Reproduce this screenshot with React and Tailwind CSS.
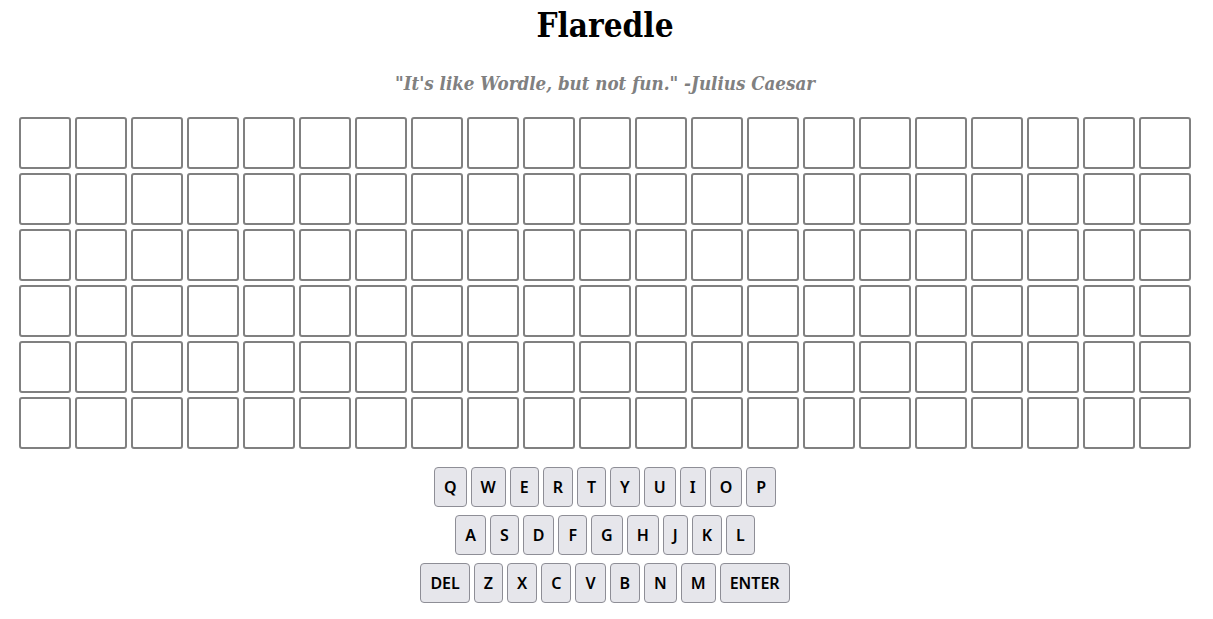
const ROWS = 6;
const COLS = 21;

const keyRows = [
  ['Q', 'W', 'E', 'R', 'T', 'Y', 'U', 'I', 'O', 'P'],
  ['A', 'S', 'D', 'F', 'G', 'H', 'J', 'K', 'L'],
  ['DEL', 'Z', 'X', 'C', 'V', 'B', 'N', 'M', 'ENTER'],
];

const Board = () => (
  <div className="flex flex-col gap-1 items-center">
    {Array.from({ length: ROWS }).map((_, r) => (
      <div key={r} className="flex gap-1">
        {Array.from({ length: COLS }).map((_, c) => (
          <div
            key={c}
            className="w-[52px] h-[52px] border-2 border-[#808080] rounded-[3px] bg-white"
          ></div>
        ))}
      </div>
    ))}
  </div>
);

const Keyboard = () => (
  <div className="flex flex-col gap-2 items-center mt-[18px]">
    {keyRows.map((row, i) => (
      <div key={i} className="flex gap-1">
        {row.map(k => (
          <button
            key={k}
            className="h-10 px-[9px] bg-[#e6e6eb] border border-[#8e8e96] rounded-[4px] text-[16px] font-semibold text-black font-['Noto_Sans',sans-serif]"
          >
            {k}
          </button>
        ))}
      </div>
    ))}
  </div>
);

export default function App() {
  return (
    <div className="w-full min-h-screen bg-white flex flex-col items-center pr-[3px]">
      <h1 className="mt-[4px] text-[33px] leading-[44px] font-bold text-black font-['DejaVu_Serif',serif] [font-stretch:condensed]">
        Flaredle
      </h1>
      <p className="mt-[23px] text-[18.6px] leading-[26px] font-bold italic text-[#808080] font-['DejaVu_Serif',serif] [font-stretch:condensed]">
        "It's like Wordle, but not fun." -Julius Caesar
      </p>
      <div className="mt-[20px]">
        <Board />
      </div>
      <Keyboard />
    </div>
  );
}
